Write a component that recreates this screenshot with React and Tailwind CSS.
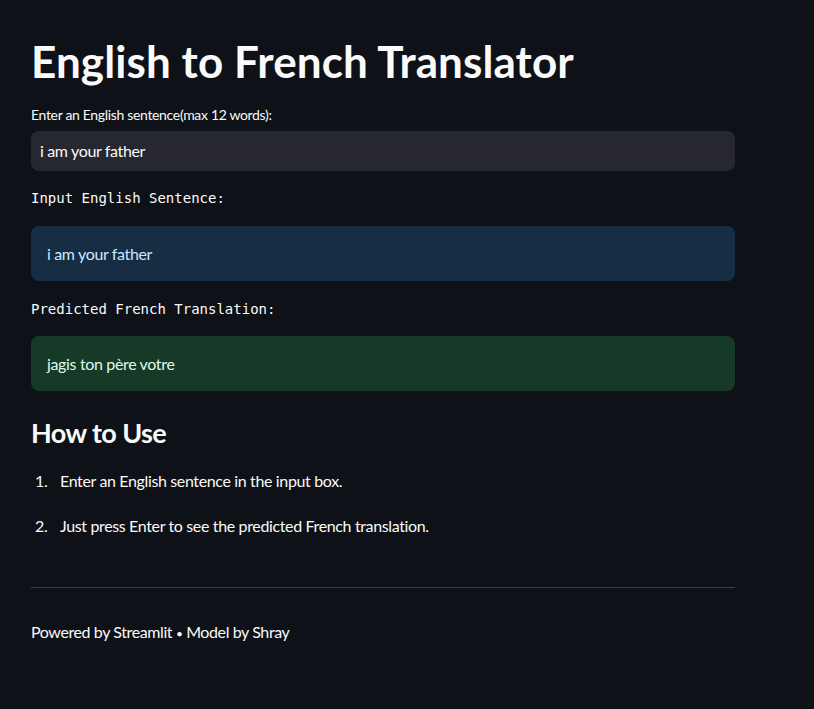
export default function App() {
  const sans = { fontFamily: '"Source Sans Pro", Lato, "Noto Sans", sans-serif' };
  return (
    <div className="min-h-[709px] w-full bg-[#0e1117] text-[#fafafa]" style={sans}>
      <div className="w-[704px] ml-[31px] pt-[35px] flex flex-col">
        <h1 className="text-[44px] leading-[52px] font-bold tracking-[0.1px] m-0">English to French Translator</h1>
        <label className="mt-[18px] text-[14px] leading-[20px] tracking-[-0.33px] text-[#fafafa]">Enter an English sentence(max 12 words):</label>
        <div className="mt-[6px] h-[40px] rounded-[8px] bg-[#262730] flex items-center px-[9px] text-[16px] tracking-[-0.35px]">i am your father</div>
        <div className="mt-[17px] text-[14px] leading-[20px] font-['DejaVu_Sans_Mono',monospace]">Input English Sentence:</div>
        <div className="mt-[18px] h-[55px] rounded-[8px] bg-[#172d43] text-[#c7ebff] flex items-center px-[16px] text-[16px] tracking-[-0.35px]">i am your father</div>
        <div className="mt-[18px] text-[14px] leading-[20px] font-['DejaVu_Sans_Mono',monospace]">Predicted French Translation:</div>
        <div className="mt-[17px] h-[55px] rounded-[8px] bg-[#173928] text-[#dffde9] flex items-center px-[16px] text-[16px] tracking-[-0.35px]">jagis ton père votre</div>
        <h3 className="mt-[24px] text-[27px] leading-[36px] font-bold tracking-[-0.6px]">How to Use</h3>
        <ol className="mt-[18px] flex flex-col gap-[21px] text-[16px] leading-[24px] tracking-[-0.36px]">
          <li className="flex"><span className="w-[29px] pl-[4px]">1.</span><span>Enter an English sentence in the input box.</span></li>
          <li className="flex"><span className="w-[29px] pl-[4px]">2.</span><span>Just press Enter to see the predicted French translation.</span></li>
        </ol>
        <div className="mt-[49px] h-px bg-[#3d3f46]" />
        <div className="mt-[32px] text-[16px] leading-[24px] tracking-[-0.4px]">Powered by Streamlit <span className="text-[12px]">•</span> Model by Shray</div>
      </div>
    </div>
  );
}
